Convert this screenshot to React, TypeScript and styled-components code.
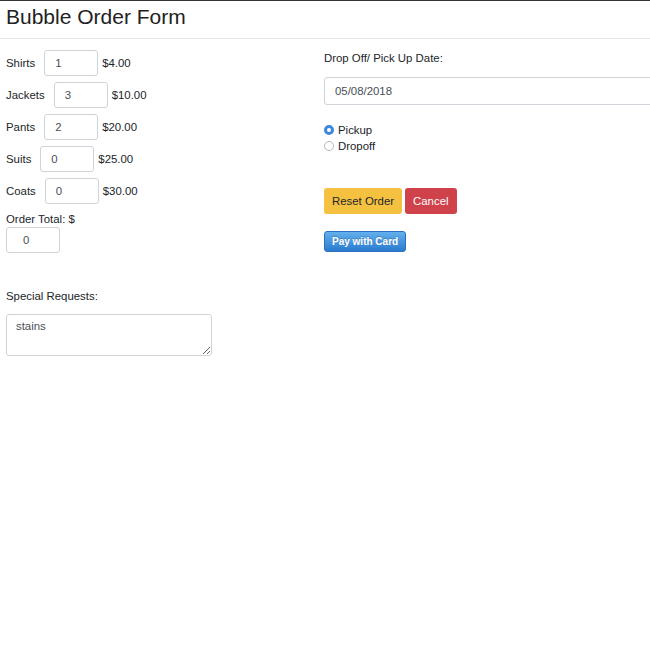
import React from "react";
import styled, { createGlobalStyle } from "styled-components";

const Global = createGlobalStyle`
  html, body { margin: 0; padding: 0; background: #fff; }
  body {
    font-family: "Liberation Sans", Arial, sans-serif;
    font-size: 11.4px;
    color: #212529;
    overflow: hidden;
  }
`;

const Page = styled.div`
  border-top: 1px solid #333;
  width: 650px;
  overflow: hidden;
`;

const Title = styled.h1`
  margin: 0;
  padding: 4px 6px 0;
  font-size: 21px;
  font-weight: 400;
  line-height: 24px;
  color: #222;
`;

const Rule = styled.hr`
  margin: 9px 0 0;
  border: 0;
  border-top: 1px solid #e6e6e6;
`;

const Columns = styled.div`
  display: grid;
  grid-template-columns: 318px 1fr;
  padding-left: 6px;
`;

const LeftCol = styled.div`
  display: flex;
  flex-direction: column;
  padding-top: 11px;
`;

const ItemRow = styled.div`
  display: flex;
  align-items: center;
  height: 26px;
  margin-bottom: 6px;
`;

const ItemLabel = styled.label`
  margin-right: 9px;
`;

const TextInput = styled.input<{ $w?: number }>`
  box-sizing: border-box;
  width: ${(p) => p.$w ?? 54}px;
  height: 26px;
  padding: 0 10px;
  border: 1px solid #ced4da;
  border-radius: 3px;
  font-family: inherit;
  font-size: 11.4px;
  color: #495057;
  background: #fff;
  outline: none;
`;

const Price = styled.span`
  margin-left: 4px;
`;

const TotalLabel = styled.div`
  margin-top: 2px;
  line-height: 14px;
`;

const TotalInput = styled(TextInput)`
  margin-top: 1px;
  padding: 0 16px;
`;

const SectionLabel = styled.div<{ $top: number }>`
  margin-top: ${(p) => p.$top}px;
  line-height: 14px;
`;

const Notes = styled.textarea`
  box-sizing: border-box;
  width: 206px;
  height: 42px;
  margin-top: 11px;
  padding: 5px 9px;
  border: 1px solid #ced4da;
  border-radius: 3px;
  font-family: inherit;
  font-size: 11.4px;
  color: #495057;
  resize: both;
  outline: none;
`;

const RightCol = styled.div`
  display: flex;
  flex-direction: column;
  align-items: flex-start;
  padding-top: 13px;
`;

const DateInput = styled(TextInput)`
  width: 360px;
  height: 28px;
  margin-top: 13px;
  padding: 0 10px;
`;

const RadioGroup = styled.div`
  display: flex;
  flex-direction: column;
  margin-top: 17px;
`;

const RadioRow = styled.label`
  display: flex;
  align-items: center;
  height: 16px;
  gap: 4px;
`;

const Radio = styled.span<{ $on?: boolean }>`
  box-sizing: border-box;
  width: 10px;
  height: 10px;
  border-radius: 50%;
  border: ${(p) => (p.$on ? "3px solid #3b87e0" : "1px solid #b8b8b8")};
  background: #fff;
`;

const ButtonRow = styled.div`
  display: flex;
  gap: 3px;
  margin-top: 34px;
`;

const Btn = styled.button<{ $kind: "warn" | "danger" }>`
  height: 26px;
  padding: 0 8px;
  border: 0;
  border-radius: 3px;
  font-family: inherit;
  font-size: 11.4px;
  background: ${(p) => (p.$kind === "warn" ? "#f5c140" : "#cf424b")};
  color: ${(p) => (p.$kind === "warn" ? "#212529" : "#fff")};
`;

const PayBtn = styled.button`
  margin-top: 17px;
  height: 21px;
  padding: 0 7px;
  border: 1px solid #2a6fbd;
  border-radius: 3px;
  background: linear-gradient(#63b0ec, #2a7bd0);
  color: #fff;
  font-family: inherit;
  font-size: 10px;
  font-weight: 700;
  text-shadow: 0 -1px 0 rgba(0, 0, 0, 0.2);
`;

const items = [
  { name: "Shirts", qty: "1", price: "$4.00" },
  { name: "Jackets", qty: "3", price: "$10.00" },
  { name: "Pants", qty: "2", price: "$20.00" },
  { name: "Suits", qty: "0", price: "$25.00" },
  { name: "Coats", qty: "0", price: "$30.00" },
];

export default function App() {
  return (
    <Page>
      <Global />
      <Title>Bubble Order Form</Title>
      <Rule />
      <Columns>
        <LeftCol>
          {items.map((it) => (
            <ItemRow key={it.name}>
              <ItemLabel>{it.name}</ItemLabel>
              <TextInput defaultValue={it.qty} />
              <Price>{it.price}</Price>
            </ItemRow>
          ))}
          <TotalLabel>Order Total: $</TotalLabel>
          <TotalInput defaultValue="0" />
          <SectionLabel $top={36}>Special Requests:</SectionLabel>
          <Notes defaultValue="stains" />
        </LeftCol>
        <RightCol>
          <div>Drop Off/ Pick Up Date:</div>
          <DateInput defaultValue="05/08/2018" />
          <RadioGroup>
            <RadioRow>
              <Radio $on />
              Pickup
            </RadioRow>
            <RadioRow>
              <Radio />
              Dropoff
            </RadioRow>
          </RadioGroup>
          <ButtonRow>
            <Btn $kind="warn">Reset Order</Btn>
            <Btn $kind="danger">Cancel</Btn>
          </ButtonRow>
          <PayBtn>Pay with Card</PayBtn>
        </RightCol>
      </Columns>
    </Page>
  );
}
